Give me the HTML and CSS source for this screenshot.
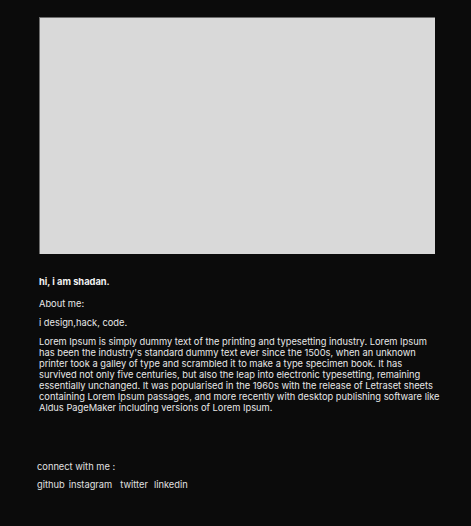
FILE: index.html
```html
<!DOCTYPE html>
<html>
<head>
<meta charset="utf-8">
<link rel="stylesheet" href="styles.css">
</head>
<body>
<main class="page">
  <section class="intro">
    <div class="hero"></div>
    <h1 class="greet">hi, i am shadan.</h1>
    <p class="label">About me:</p>
    <p class="tag">i design,hack, code.</p>
    <p class="bio">Lorem Ipsum is simply dummy text of the printing and typesetting industry. Lorem Ipsum has been the industry's standard dummy text ever since the 1500s, when an unknown printer took a galley of type and scrambled it to make a type specimen book. It has survived not only five centuries, but also the leap into electronic typesetting, remaining essentially unchanged. It was popularised in the 1960s with the release of Letraset sheets containing Lorem Ipsum passages, and more recently with desktop publishing software like Aldus PageMaker including versions of Lorem Ipsum.</p>
  </section>
  <section class="connect">
    <p class="connect-title">connect with me :</p>
    <nav class="links">
      <a class="link" href="#">github</a>
      <a class="link l2" href="#">instagram</a>
      <a class="link l3" href="#">twitter</a>
      <a class="link l4" href="#">linkedin</a>
    </nav>
  </section>
</main>
</body>
</html>
```
FILE: styles.css
```css
html, body {
  margin: 0;
  padding: 0;
  background: #0b0b0b;
}
body {
  font-family: Inter, "Liberation Sans", sans-serif;
  font-size: 9.3px;
  color: #e8e8e8;
}
.page {
  padding: 17px 36px 0 39px;
}
.intro {
  width: 396px;
}
.hero {
  height: 236px;
  background: #d9d9d9;
  border-top: 1px solid #6e6e6e;
  border-left: 1px solid #6e6e6e;
}
.greet {
  margin: 22px 0 0;
  font-size: 9.3px;
  font-weight: 700;
  line-height: 12px;
  color: #f2f2f2;
}
.label {
  margin: 10px 0 0;
  line-height: 12px;
}
.tag {
  margin: 7px 0 0;
  line-height: 12px;
}
.bio {
  margin: 7px -5px 0 0;
  line-height: 11px;
}
.connect {
  margin: 48px 0 0 -2px;
}
.connect-title {
  margin: 0;
  line-height: 12px;
  color: #e0e0e0;
}
.links {
  margin-top: 6px;
  display: flex;
  line-height: 12px;
}
.link {
  color: #e0e0e0;
  text-decoration: none;
}
.l2 { margin-left: 4px; }
.l3 { margin-left: 8px; }
.l4 { margin-left: 6px; }
```
